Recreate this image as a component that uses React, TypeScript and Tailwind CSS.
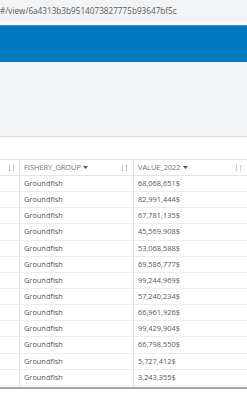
import React from "react";

const values = [
  "68,068,651$",
  "82,991,444$",
  "67,781,135$",
  "45,569,908$",
  "53,068,588$",
  "69,586,777$",
  "99,244,969$",
  "57,240,234$",
  "66,961,926$",
  "99,429,904$",
  "66,798,550$",
  "5,727,412$",
  "3,243,355$",
];

function SortIcon() {
  return (
    <svg width="7" height="8" viewBox="0 0 7 8" className="shrink-0">
      <path d="M1.5 0.5v6.5M0 5.5l1.5 1.5 1.5-1.5" stroke="#c4c4c4" strokeWidth="0.8" fill="none" />
      <path d="M5.5 7.5v-6.5M4 2.5l1.5-1.5 1.5 1.5" stroke="#c4c4c4" strokeWidth="0.8" fill="none" />
    </svg>
  );
}

function Caret() {
  return (
    <svg width="5" height="3" viewBox="0 0 5 3" className="ml-[2px] shrink-0">
      <path d="M0 0h5L2.5 3z" fill="#555" />
    </svg>
  );
}

export default function App() {
  return (
    <div className="w-[247px] h-[400px] overflow-hidden bg-white font-['Open_Sans','Liberation_Sans',sans-serif] text-[#595959]">
      {/* address bar */}
      <div className="h-[22px] bg-[#f2f3f5] flex items-center text-[8.2px] text-[#5a5a5a] whitespace-nowrap">
        #/view/6a4313b3b9514073827775b93647bf5c
      </div>
      <div className="h-[3px] bg-white" />

      {/* app header */}
      <div className="h-[37px] bg-[#0079c1] border-t border-[#3593cf]" />

      {/* toolbar area */}
      <div className="h-[75px] bg-[#f3f4f6] border-b border-[#d9d9d9]" />
      <div className="h-[22px] bg-white" />

      {/* table */}
      <div className="h-[230px] overflow-hidden border-t border-[#e4e4e4] border-b-2 border-b-[#a3a3a3]">
        <div className="grid grid-cols-[20px_114px_1fr] h-[16px] border-b border-[#e4e4e4] text-[7.4px] text-[#707070]">
          <div className="border-r border-[#e4e4e4] flex items-center justify-end pr-[4px]">
            <SortIcon />
          </div>
          <div className="border-r border-[#e4e4e4] flex items-center pl-[4px] pr-[5px]">
            <span className="flex items-center">
              FISHERY_GROUP
              <Caret />
            </span>
            <span className="ml-auto">
              <SortIcon />
            </span>
          </div>
          <div className="flex items-center pl-[4px] pr-[5px]">
            <span className="flex items-center">
              VALUE_2022
              <Caret />
            </span>
            <span className="ml-auto">
              <SortIcon />
            </span>
          </div>
        </div>
        {values.map((v, i) => (
          <div
            key={i}
            className="grid grid-cols-[20px_114px_1fr] h-[16.15px] border-b border-[#ececec] text-[7.4px] text-[#555]"
          >
            <div className="border-r border-[#e4e4e4]" />
            <div className="border-r border-[#e4e4e4] flex items-center pl-[4px]">Groundfish</div>
            <div className="flex items-center pl-[4px]">{v}</div>
          </div>
        ))}
        <div className="grid grid-cols-[20px_114px_1fr] h-[16px]">
          <div className="border-r border-[#e4e4e4]" />
          <div className="border-r border-[#e4e4e4]" />
          <div />
        </div>
      </div>
    </div>
  );
}
